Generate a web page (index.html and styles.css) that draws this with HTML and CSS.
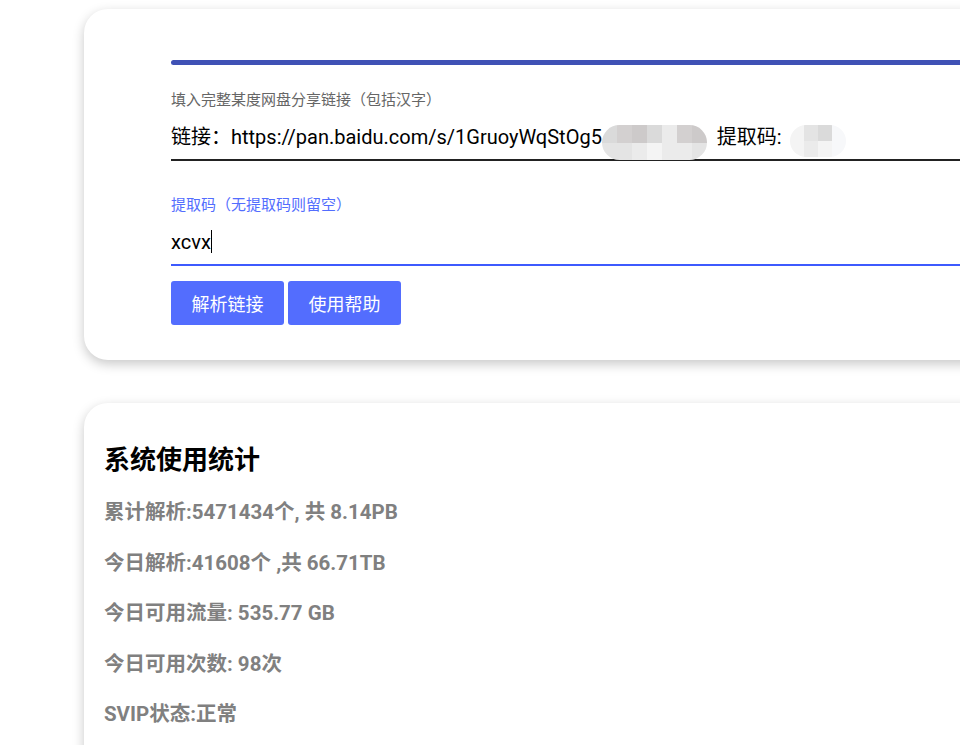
FILE: index.html
```html
<!DOCTYPE html>
<html>

<head>
    <title>网盘解析</title>
    <meta charset="UTF-8">
    <meta name="viewport" content="width=device-width, initial-scale=1.0">
    <link rel="stylesheet" href="styles.css">
</head>

<body>
    <div class="page">
        <section class="card parse-card">
            <div class="progress"></div>

            <div class="field">
                <div class="field-label">填入完整某度网盘分享链接（包括汉字）</div>
                <div class="field-input">链接：https://pan.baidu.com/s/1GruoyWqStOg5<span class="mosaic mosaic-wide"><span class="mosaic-grid"><i class="m3"></i><i class="m4"></i><i class="m5"></i><i class="m3"></i><i class="m1"></i><i class="m4"></i><i class="m5"></i><i class="m2"></i><i class="m2"></i><i class="m1"></i><i class="m0"></i><i class="m1"></i><i class="m1"></i><i class="m2"></i></span></span> 提取码:<span class="mosaic mosaic-small"><span class="mosaic-grid"><i class="m0"></i><i class="m2"></i><i class="m3"></i><i class="m9"></i><i class="m0"></i><i class="m1"></i><i class="m0"></i><i class="m9"></i></span></span></div>
            </div>

            <div class="field field-active">
                <div class="field-label">提取码（无提取码则留空）</div>
                <div class="field-input">xcvx<span class="caret"></span></div>
            </div>

            <div class="actions">
                <button class="btn">解析链接</button>
                <button class="btn">使用帮助</button>
            </div>
        </section>

        <section class="card stats-card">
            <h2>系统使用统计</h2>
            <p>累计解析:5471434个, 共 8.14PB</p>
            <p>今日解析:41608个 ,共 66.71TB</p>
            <p>今日可用流量: 535.77 GB</p>
            <p>今日可用次数: 98次</p>
            <p>SVIP状态:正常</p>
        </section>
    </div>
</body>

</html>
```

FILE: styles.css
```css
html,
body {
    margin: 0;
    padding: 0;
    overflow: hidden;
    background-color: #fff;
    font-family: Roboto, "Noto Sans CJK SC", sans-serif;
}

.page {
    padding: 9px 0 0 84px;
    width: 1000px;
}

.card {
    background-color: #fff;
    border-radius: 24px;
    box-shadow: 0px 4px 12px rgba(0, 0, 0, 0.22);
}

/* parse form */

.parse-card {
    padding: 51px 0 35px 87px;
}

.progress {
    height: 5px;
    background-color: #3f51b5;
    border-radius: 3px 0 0 3px;
}

.field {
    margin-top: 25px;
}

.field-active {
    margin-top: 34px;
}

.field-label {
    font-size: 15px;
    line-height: 20px;
    color: #666;
    margin-bottom: 12px;
}

.field-active .field-label {
    color: #536dfe;
}

.field-input {
    font-size: 20px;
    line-height: 30px;
    height: 30px;
    color: #000;
    padding-bottom: 7px;
    border-bottom: 2px solid #222;
    white-space: nowrap;
}

.field-active .field-input {
    border-bottom-color: #3d5afe;
}

.caret {
    display: inline-block;
    width: 0;
    height: 23px;
    border-left: 1px solid #000;
    vertical-align: -4px;
}

/* blurred parts of the link */

.mosaic {
    display: inline-block;
    position: relative;
    height: 1px;
}

.mosaic-grid {
    position: absolute;
    left: 0;
    display: grid;
    overflow: hidden;
}

.mosaic-wide {
    width: 106px;
    margin-right: 4px;
}

.mosaic-wide .mosaic-grid {
    bottom: -16px;
    grid-template-columns: repeat(7, 15px);
    grid-template-rows: 18px 17px;
    border-radius: 18px;
}

.mosaic-small {
    width: 56px;
    margin-left: 8px;
}

.mosaic-small .mosaic-grid {
    bottom: -13px;
    grid-template-columns: repeat(4, 14px);
    grid-template-rows: 16px 16px;
    border-radius: 16px;
}

.mosaic i {
    display: block;
}

.m0 { background-color: #f4f4f4; }
.m1 { background-color: #ebebeb; }
.m2 { background-color: #e4e4e4; }
.m3 { background-color: #dadada; }
.m4 { background-color: #d3d0d0; }
.m5 { background-color: #cdcaca; }
.m9 { background-color: #f7f8fa; }

.actions {
    margin-top: 15px;
    display: flex;
    gap: 4px;
}

.btn {
    height: 44px;
    padding: 0 20.5px;
    background-color: #536dfe;
    color: white;
    border: none;
    border-radius: 3px;
    font-family: Roboto, "Noto Sans CJK SC", sans-serif;
    font-size: 18px;
    cursor: pointer;
}

.btn:hover {
    background-color: #3d5afe;
}

/* stats */

.stats-card {
    margin-top: 43px;
    padding: 39px 20px 40px;
}

.stats-card h2 {
    margin: 0 0 19px;
    font-size: 26px;
    line-height: 36px;
    color: #000;
}

.stats-card p {
    margin: 0 0 20.5px;
    font-size: 20.5px;
    line-height: 30px;
    font-weight: bold;
    color: #808080;
}
```
